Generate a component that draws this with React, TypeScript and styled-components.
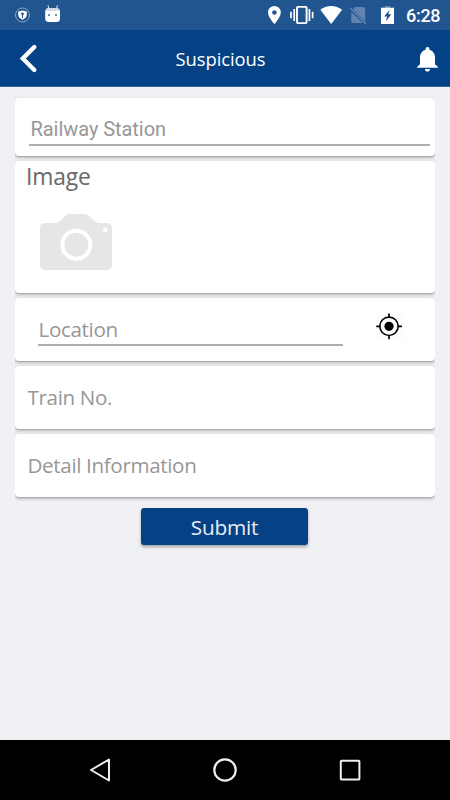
import React from "react";
import styled, { createGlobalStyle } from "styled-components";

const GlobalStyle = createGlobalStyle`
  * { box-sizing: border-box; }
  body { margin: 0; background: #f0f1f4; }
`;

const Screen = styled.div`
  width: 450px;
  height: 800px;
  display: flex;
  flex-direction: column;
  overflow: hidden;
  background: #f0f1f4;
  font-family: "Open Sans", "Noto Sans", sans-serif;
`;

const StatusBar = styled.div`
  height: 30px;
  flex: none;
  display: flex;
  justify-content: space-between;
  padding: 0 10px 0 14px;
  background: #20558f;
  color: #fff;
`;

const IconGroup = styled.div<{ $gap: number }>`
  display: flex;
  gap: ${(p) => p.$gap}px;
  height: 30px;
`;

const Glyph = styled.svg`
  display: block;
  flex: none;
  overflow: visible;
`;

const Clock = styled.span`
  width: 34px;
  font: 500 18px/31px Roboto, sans-serif;
  letter-spacing: -0.3px;
  white-space: nowrap;
  margin-left: 1px;
`;

const AppBar = styled.header`
  height: 57px;
  flex: none;
  display: grid;
  grid-template-columns: 60px 1fr 60px;
  background: #044285;
  border-bottom: 1px solid #36629a;
  color: #fff;
`;

const Title = styled.h1`
  margin: 0;
  padding-right: 9px;
  text-align: center;
  font-size: 18.4px;
  font-weight: 400;
  letter-spacing: -0.05px;
  line-height: 58px;
`;

const BarButton = styled.button`
  border: 0;
  padding: 0;
  background: none;
  height: 56px;
`;

const Content = styled.main`
  flex: 1;
  padding: 5px 15px 0;
`;

const CardList = styled.div`
  display: flex;
  flex-direction: column;
  gap: 5px;
  padding: 5.5px 0;
  overflow: hidden;
`;

const Card = styled.section<{ $height: number }>`
  height: ${(p) => p.$height}px;
  flex: none;
  border-radius: 4px;
  background: #fff;
  box-shadow: 0 1px 2px rgba(0, 0, 0, 0.26), 0 2px 4px rgba(0, 0, 0, 0.16);
`;

const StationField = styled.div`
  margin: 0 5px 0 14px;
  height: 48.5px;
  padding: 16px 0 0 1.5px;
  border-bottom: 2px solid #aeaeae;
  color: #979797;
  font: 400 20px/30px Roboto, sans-serif;
  letter-spacing: -0.05px;
`;

const SectionTitle = styled.h2`
  margin: 0;
  padding-left: 11px;
  color: #686868;
  font-size: 22.8px;
  font-weight: 400;
  letter-spacing: -0.15px;
  line-height: 32px;
`;

const LocationRow = styled.div`
  display: flex;
  padding-left: 23px;
`;

const LocationField = styled.div`
  width: 305px;
  height: 48px;
  padding: 16px 0 0 0.5px;
  border-bottom: 2px solid #aeaeae;
  color: #979797;
  font-size: 20.6px;
  letter-spacing: -0.35px;
  line-height: 30px;
`;

const PlainField = styled.div`
  padding-left: 12.5px;
  color: #979797;
  font-size: 20.6px;
  letter-spacing: -0.35px;
  line-height: 63px;
`;

const Submit = styled.button`
  display: block;
  width: 167px;
  height: 37px;
  margin: 6px 0 0 126px;
  padding: 0;
  border: 0;
  border-radius: 3px;
  background: #044285;
  color: #e9eef6;
  font: 400 20.8px/38px "Open Sans", sans-serif;
  letter-spacing: -0.2px;
  box-shadow: 0 2px 3px rgba(0, 0, 0, 0.32);
`;

const NavBar = styled.nav`
  height: 60px;
  flex: none;
  display: flex;
  justify-content: center;
  gap: 101px;
  background: #000;
`;

export default function App() {
  return (
    <Screen>
      <GlobalStyle />
      <StatusBar>
        <IconGroup $gap={14}>
          <Glyph width="17" height="30" viewBox="14 0 17 30">
            <circle cx="22.5" cy="15" r="7" fill="none" stroke="#a5bbd3" strokeWidth=".8" />
            <path d="M22.5 10.4l4.3 1.2v3.2c0 2.3-1.8 4-4.3 5-2.5-1-4.3-2.7-4.3-5v-3.2z" fill="#fff" />
            <circle cx="22.5" cy="13.9" r="1.3" fill="#20558f" />
            <path d="M22.5 14v4" stroke="#20558f" strokeWidth="1" />
          </Glyph>
          <Glyph width="16" height="30" viewBox="45 0 16 30">
            <path d="M48 5.3l1.2 4M57.5 5.3l-1.2 4" stroke="#e6edf5" strokeWidth="1" />
            <path d="M45.2 11.5Q45.3 8 49 8h7.2q3.7 0 3.8 3.5v7q0 3.5-3.5 3.5h-7.6q-3.6 0-3.7-3.5z" fill="#fff" />
            <path d="M46 10.8Q46.5 8 49 8h7.2q2.7 0 3.2 2.8z" fill="#ccdaea" />
            <path d="M48 14h2v2h-2zM55 14h2v2h-2z" fill="#6f8eb4" />
          </Glyph>
        </IconGroup>
        <IconGroup $gap={8}>
          <Glyph width="14" height="30" viewBox="267 0 14 30">
            <path fillRule="evenodd" d="M274.4 6a6.4 6.4 0 0 0-6.4 6.4c0 4.8 6.4 11.6 6.4 11.6s6.4-6.8 6.4-11.6a6.4 6.4 0 0 0-6.4-6.4zm0 4.2a2.3 2.3 0 1 1 0 4.6 2.3 2.3 0 0 1 0-4.6z" fill="#fff" />
          </Glyph>
          <Glyph width="24" height="30" viewBox="289 0 24 30">
            <rect x="297" y="6.9" width="9.6" height="16.2" rx=".8" fill="none" stroke="#fff" strokeWidth="1.9" />
            <path d="M294.2 9v12M309.4 9v12M291 11.8v6.4M312.6 11.8v6.4" stroke="#fff" strokeWidth="1.7" />
          </Glyph>
          <Glyph width="22" height="30" viewBox="321 0 22 30">
            <path d="M320.3 9.8Q325 6 331.2 6t10.9 3.8L331.2 24z" fill="#fff" />
          </Glyph>
          <Glyph width="20" height="30" viewBox="351 0 20 30">
            <path d="M355.5 7h8q1.7 0 1.7 1.6v13L353 9.2zM351.3 12l11.5 11H353q-1.7 0-1.7-1.6z" fill="#6185b0" />
            <path d="M350.4 8.3l15.4 15.4" stroke="#6185b0" strokeWidth="1.4" />
          </Glyph>
          <Glyph width="16" height="30" viewBox="379 0 16 30">
            <path d="M385 6h5v2h-5z" fill="#6d8fb6" />
            <path d="M381 7.7h13V24h-13z" fill="#fff" />
            <path d="M389.7 9.7l-5.6 6.7h3l-1.2 5.2 5.4-7.3h-2.9z" fill="#20558f" />
          </Glyph>
          <IconGroup $gap={0}>
            <Glyph width="2" height="30" />
            <Clock>6:28</Clock>
          </IconGroup>
        </IconGroup>
      </StatusBar>
      <AppBar>
        <BarButton aria-label="Back">
          <Glyph width="60" height="56" viewBox="0 30 60 56">
            <path d="M34.3 47L22.8 58.5 34.3 70" fill="none" stroke="#fff" strokeWidth="4.4" strokeLinecap="round" />
          </Glyph>
        </BarButton>
        <Title>Suspicious</Title>
        <BarButton aria-label="Notifications">
          <Glyph width="60" height="56" viewBox="390 30 60 56">
            <path d="M427.5 47c1.2 0 1.9.8 1.9 1.9v.8c3.6 1 5.6 4 5.6 7.8v6.7l3 2.8v.8h-21v-.8l3-2.8v-6.7c0-3.8 2-6.8 5.6-7.8v-.8c0-1.1.7-1.9 1.9-1.9zM425 69h5c0 1.6-1 2.6-2.5 2.6S425 70.6 425 69z" fill="#fff" />
          </Glyph>
        </BarButton>
      </AppBar>
      <Content>
        <CardList>
          <Card $height={58}>
            <StationField>Railway Station</StationField>
          </Card>
          <Card $height={132}>
            <SectionTitle>Image</SectionTitle>
            <Glyph width="110" height="90" viewBox="15 193 110 90">
              <path d="M45 223h9q5 0 8-4l3-3q2-2 5-2h14q3 0 5 2l3 3q4 4 8 4h7q5 0 5 5v37q0 5-5 5H45q-5 0-5-5v-37q0-5 5-5z" fill="#e6e6e7" />
              <circle cx="76.3" cy="244.7" r="14" fill="none" stroke="#fff" strokeWidth="4" />
              <circle cx="105.2" cy="229.8" r="2.4" fill="#fff" />
            </Glyph>
          </Card>
          <Card $height={63}>
            <LocationRow>
              <LocationField>Location</LocationField>
              <Glyph width="92" height="56" viewBox="343 298 92 56">
                <path d="M374 311h30v30h-30z" fill="#fdfdfd" />
                <circle cx="389" cy="326.3" r="4.6" />
                <circle cx="389" cy="326.3" r="9.2" fill="none" stroke="#000" strokeWidth="1.6" />
                <path d="M389 313.4v4M389 335.2v4M376.3 326.3h4M397.9 326.3h4" stroke="#000" strokeWidth="1.7" />
              </Glyph>
            </LocationRow>
          </Card>
          <Card $height={63}>
            <PlainField>Train No.</PlainField>
          </Card>
          <Card $height={63}>
            <PlainField>Detail Information</PlainField>
          </Card>
        </CardList>
        <Submit>Submit</Submit>
      </Content>
      <NavBar>
        <Glyph width="24" height="60" viewBox="88 740 24 60">
          <path d="M109 759.5v21L91 770z" fill="none" stroke="#eee" strokeWidth="2" strokeLinejoin="round" />
        </Glyph>
        <Glyph width="24" height="60" viewBox="213 740 24 60">
          <circle cx="225" cy="770" r="10.7" fill="none" stroke="#eee" strokeWidth="2.2" />
        </Glyph>
        <Glyph width="24" height="60" viewBox="338 740 24 60">
          <rect x="340.8" y="760.8" width="18.6" height="18.6" rx=".6" fill="none" stroke="#eee" strokeWidth="2" />
        </Glyph>
      </NavBar>
    </Screen>
  );
}
